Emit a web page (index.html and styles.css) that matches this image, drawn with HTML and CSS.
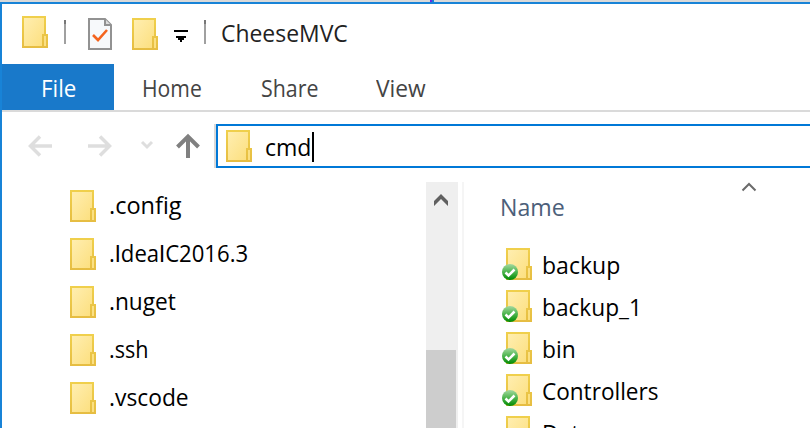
FILE: index.html
```html
<!DOCTYPE html>
<html lang="en">
<head>
<meta charset="utf-8">
<title>CheeseMVC</title>
<link rel="stylesheet" href="styles.css">
</head>
<body>
<svg width="0" height="0" class="defs" aria-hidden="true">
  <defs>
    <linearGradient id="paper" x1="0" y1="0" x2="1" y2="1"><stop offset="0" stop-color="#ffeeb0"/><stop offset="1" stop-color="#fcdf7e"/></linearGradient>
    <linearGradient id="edge" x1="0" y1="0" x2="0" y2="1"><stop offset="0" stop-color="#f0d04c"/><stop offset="1" stop-color="#e6bd42"/></linearGradient>
    <linearGradient id="green" x1="0" y1="0" x2="0" y2="1"><stop offset="0" stop-color="#a5d8a0"/><stop offset=".45" stop-color="#55b956"/><stop offset="1" stop-color="#008a00"/></linearGradient>
    <symbol id="folder" viewBox="0 0 26 32">
      <path fill="url(#edge)" d="M0 0H24V18H26V32H0Z"/>
      <path fill="url(#paper)" d="M2 2H22V18H20V30H2Z"/>
      <path fill="#fbe083" d="M22 20H24V30H22Z"/>
    </symbol>
    <symbol id="synced" viewBox="0 0 16 16">
      <circle cx="8" cy="8" r="8" fill="url(#green)"/>
      <path d="M3.5 8.5L6.5 11.5L12.5 5.5" fill="none" stroke="#fff" stroke-width="2.5"/>
    </symbol>
  </defs>
</svg>
<div class="backdrop"><i></i></div>
<main class="window">
  <header class="titlebar">
    <svg class="folder"><use href="#folder"/></svg>
    <span class="sep sep-a"></span>
    <svg class="doc" viewBox="0 0 24 32">
      <path d="M1 1H17L23 7V31H1Z" fill="#f7f9fb" stroke="#929292" stroke-width="2"/>
      <path d="M17 1V7H23" fill="#ddd" stroke="#929292" stroke-width="2"/>
      <path d="M5 17L10 22L19 12" fill="none" stroke="#f4641e" stroke-width="2.6"/>
    </svg>
    <svg class="folder folder-low"><use href="#folder"/></svg>
    <svg class="customize" viewBox="0 0 14 12" shape-rendering="crispEdges"><path d="M0 0H14V2H0ZM2 6H12V8H10V10H8V12H6V10H4V8H2Z"/></svg>
    <span class="sep sep-b"></span>
    <h1 class="title">CheeseMVC</h1>
  </header>
  <nav class="tabs">
    <a class="tab file"><span>File</span></a>
    <a class="tab home"><span>Home</span></a>
    <a class="tab share"><span>Share</span></a>
    <a class="tab view"><span>View</span></a>
  </nav>
  <div class="navbar">
    <svg class="arrows" viewBox="0 0 190 44">
      <g fill="none" stroke="#dedede" stroke-width="3.5">
        <path d="M52 22H30M40 12.500L30.500 22L40 31.500"/>
        <path d="M88 22H110M100 12.500L109.500 22L100 31.500"/>
        <path d="M142 18L147 23L152 18" stroke-width="3"/>
      </g>
      <path d="M188 34V13M177.500 23L188 12.500L198.500 23" fill="none" stroke="#808080" stroke-width="4"/>
    </svg>
    <div class="address"><svg class="folder"><use href="#folder"/></svg><span class="cmd">cmd</span><i class="caret"></i></div>
  </div>
  <section class="panes">
    <ul class="tree">
      <li><svg class="folder"><use href="#folder"/></svg><span class="t1">.config</span></li>
      <li><svg class="folder"><use href="#folder"/></svg><span class="t2">.<b>I</b>dea<b>I</b>C2016.3</span></li>
      <li><svg class="folder"><use href="#folder"/></svg><span class="t3">.nuget</span></li>
      <li><svg class="folder"><use href="#folder"/></svg><span class="t4">.ssh</span></li>
      <li><svg class="folder"><use href="#folder"/></svg><span class="t5">.vscode</span></li>
    </ul>
    <div class="scrollbar">
      <svg viewBox="0 0 14 12"><path d="M7 0L14 7V12L7 5L0 12V7Z" fill="#606060"/></svg>
      <div class="thumb"></div>
    </div>
    <div class="files">
      <div class="column"><span>Name</span><svg viewBox="0 0 16 10"><path d="M1.500 8.500L8 2L14.500 8.500" fill="none" stroke="#6b6b6b" stroke-width="2"/></svg></div>
      <ul class="list">
        <li><svg class="folder"><use href="#folder"/></svg><svg class="badge"><use href="#synced"/></svg><span class="f1">backup</span></li>
        <li><svg class="folder"><use href="#folder"/></svg><svg class="badge"><use href="#synced"/></svg><span class="f2">backup_1</span></li>
        <li><svg class="folder"><use href="#folder"/></svg><svg class="badge"><use href="#synced"/></svg><span class="f3">bin</span></li>
        <li><svg class="folder"><use href="#folder"/></svg><svg class="badge"><use href="#synced"/></svg><span class="f4">Controllers</span></li>
        <li><svg class="folder"><use href="#folder"/></svg><svg class="badge"><use href="#synced"/></svg><span class="f5">Data</span></li>
      </ul>
    </div>
  </section>
</main>
</body>
</html>
```
FILE: styles.css
```css
* { box-sizing: border-box; }
body { margin: 0; width: 810px; height: 428px; overflow: hidden; background: #fff; font: 24px/32px "Open Sans", "Noto Sans", sans-serif; color: #000; }
.defs { position: absolute; }
ul { margin: 0; padding: 0; list-style: none; }
svg { display: block; flex: none; }
span, h1 { white-space: nowrap; transform-origin: 0 50%; }
.backdrop { height: 2px; background: #d9d9d9; }
.backdrop i { display: block; width: 4px; height: 2px; margin-left: 430px; background: linear-gradient(90deg, #6a2be0 50%, #1883d7 50%); }
.window { height: 426px; border-top: 2px solid #1883d7; border-left: 2px solid #1883d7; overflow: hidden; }
.folder { width: 26px; height: 32px; }
.titlebar { height: 60px; display: flex; align-items: flex-start; padding: 12px 0 0 20px; }
.sep { width: 2px; height: 24px; margin-top: 4px; background: #a0a0a0; border-top: 4px solid #777; }
.sep-a { margin-left: 16px; }
.doc { width: 24px; height: 32px; margin: 2px 0 0 22px; }
.folder-low { margin: 2px 0 0 20px; }
.customize { width: 14px; height: 12px; margin: 14px 0 0 16px; }
.sep-b { margin-left: 16px; }
.title { margin: 1px 0 0 15px; font-size: 24px; font-weight: 400; line-height: 32px; color: #222; transform: scaleX(.955); }
.tabs { height: 48px; display: flex; border-bottom: 2px solid #dadada; color: #444; font-size: 23px; line-height: 48px; }
.tab { display: flex; }
.tab span { transform: scaleX(.97); }
.file { width: 112px; height: 46px; padding-left: 39px; background: #1979ca; color: #fff; }
.home { width: 117px; padding-left: 28px; }
.home span { transform: scaleX(.92); }
.share { width: 115px; padding-left: 30px; }
.share span { transform: scaleX(.93); }
.view { padding-left: 30px; }
.view span { transform: scaleX(.99); }
.navbar { height: 70px; padding-top: 12px; display: flex; }
.arrows { width: 190px; height: 44px; overflow: visible; margin: 0 26px 0 -2px; }
.address { flex: 1; height: 44px; padding: 4px 0 0 8px; display: flex; border: 2px solid #0078d7; border-right: 0; box-shadow: -2px 0 #d9d9d9; }
.cmd { width: 47px; margin: 1px 0 0 13px; transform: scaleX(.96); }
.caret { width: 2px; height: 30px; background: #000; margin-top: 2px; }
.panes { display: flex; height: 246px; }
.tree { width: 424px; padding: 8px 0 0 68px; }
.tree li { display: flex; height: 48px; }
.tree span { margin: -1px 0 0 13px; }
.t1 { transform: scaleX(.98); }
.t2 { transform: scaleX(.922); }
/* sans capital I without crossbars */
.t2 b { font-family: Roboto, sans-serif; font-weight: 400; }
.t3 { transform: scaleX(.945); }
.t4 { transform: scaleX(.9); }
.t5 { transform: scaleX(.95); }
.scrollbar { width: 32px; background: #efefef; padding-top: 12px; }
.scrollbar svg { width: 14px; height: 12px; margin-left: 8px; }
.thumb { width: 30px; height: 78px; margin-top: 144px; background: #cdcdcd; }
.files { flex: 1; margin-left: 4px; border-left: 2px solid #f5f5f5; }
.column { height: 66px; padding-left: 36px; display: flex; color: #4c607a; }
.column span { width: 241px; margin-top: 9px; transform: scaleX(.965); }
.column svg { width: 16px; height: 10px; }
.list { padding-left: 42px; }
.list li { position: relative; display: flex; height: 42px; }
.list span { margin: 1px 0 0 10px; }
.f1 { transform: scaleX(.96); }
.f2 { transform: scaleX(.945); }
.f3 { transform: scaleX(.95); }
.f4 { transform: scaleX(.94); }
.f5 { transform: scaleX(.95); }
.badge { position: absolute; left: -4px; top: 16px; width: 16px; height: 16px; }
```
